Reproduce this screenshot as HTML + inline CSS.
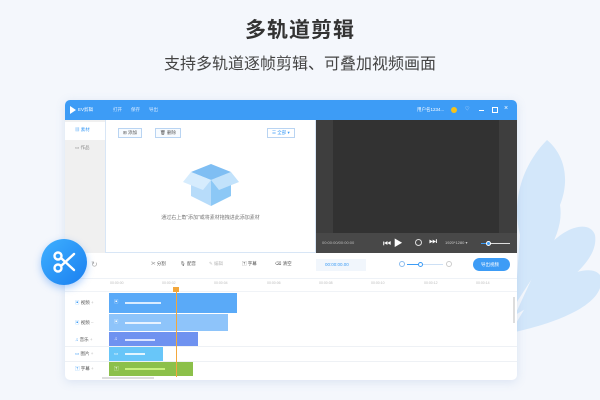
<!DOCTYPE html>
<html><head><meta charset="utf-8"><style>
*{margin:0;padding:0;box-sizing:border-box}
body{width:600px;height:400px;overflow:hidden;background:#f4f7fc;font-family:"Liberation Sans","Noto Sans CJK SC",sans-serif;position:relative}
.a{position:absolute}
.t{font-size:4.5px;color:#555;white-space:nowrap}
</style></head><body>
<div class="a" style="left:0;top:14px;width:600px;text-align:center;font-size:21px;font-weight:bold;color:#333;letter-spacing:1px">多轨道剪辑</div>
<div class="a" style="left:0;top:50px;width:600px;text-align:center;font-size:16px;color:#444">支持多轨道逐帧剪辑、可叠加视频画面</div>
<!-- leaves -->
<svg class="a" style="left:505px;top:135px" width="95" height="200" viewBox="0 0 95 200">
<path d="M10 170 C35 130 60 100 55 70 C65 45 60 20 42 5 C22 25 5 60 15 100 Z" fill="#d3e7fa"/>
<path d="M10 180 C45 160 95 130 90 100 C85 85 60 90 40 115 Z" fill="#d3e7fa"/>
<path d="M5 198 C45 190 105 170 95 140 C85 128 55 140 25 165 Z" fill="#d3e7fa"/>
</svg>
<!-- window -->
<div class="a" style="left:65px;top:100px;width:452px;height:280px;background:#fff;border-radius:5px;box-shadow:0 2px 10px rgba(100,140,200,.18);overflow:hidden">
 <div class="a" style="left:0;top:0;width:452px;height:20px;background:#3d9cf6"></div>
 <div class="a" style="left:5px;top:6px;width:0;height:0;border-left:6px solid #fff;border-top:4px solid transparent;border-bottom:4px solid transparent"></div>
 <div class="a t" style="left:13px;top:7px;color:#fff">EV剪辑</div>
 <div class="a t" style="left:48px;top:7px;color:#dcecff">打开</div>
 <div class="a t" style="left:66px;top:7px;color:#dcecff">保存</div>
 <div class="a t" style="left:84px;top:7px;color:#dcecff">导出</div>
 <div class="a t" style="left:352px;top:7px;color:#fff">用户名1234...</div>
 <div class="a" style="left:386px;top:7px;width:6px;height:6px;border-radius:50%;background:#f6c21a"></div>
 <div class="a t" style="left:400px;top:6px;color:#cfe3ff">♡</div>
 <div class="a" style="left:414px;top:10px;width:5px;height:1px;background:#fff"></div>
 <div class="a" style="left:427px;top:7px;width:6px;height:6px;border:1px solid #fff"></div>
 <div class="a t" style="left:439px;top:5px;color:#fff;font-size:7px">×</div>
 <!-- sidebar -->
 <div class="a" style="left:0;top:20px;width:40px;height:133px;background:#f0f0f0"></div>
 <div class="a" style="left:0;top:22px;width:40px;height:18px;background:#fff"></div>
 <div class="a t" style="left:10px;top:27px;color:#3d9cf6">▦ 素材</div>
 <div class="a t" style="left:10px;top:45px;color:#888">▭ 作品</div>
 <!-- media -->
 <div class="a" style="left:40px;top:20px;width:211px;height:133px;background:#fff;border:1px solid #d8e6f6;border-top:none"></div>
 <div class="a t" style="left:53px;top:28px;border:1px solid #b9d4f2;padding:1px 4px;background:#f7fbff">⊞ 添加</div>
 <div class="a t" style="left:90px;top:28px;border:1px solid #b9d4f2;padding:1px 4px;background:#f7fbff">🗑 删除</div>
 <div class="a t" style="left:202px;top:28px;border:1px solid #b9d4f2;padding:1px 4px;color:#3d9cf6">☰ 全部 ▾</div>
 <svg class="a" style="left:118px;top:58px" width="56" height="50" viewBox="0 0 56 50">
  <polygon points="28,6 48,14 28,22 8,14" fill="#7fbef3"/>
  <polygon points="8,14 28,22 28,48 8,38" fill="#b7dcfa"/>
  <polygon points="48,14 28,22 28,48 48,38" fill="#8cc8f6"/>
  <polygon points="8,14 0,24 20,32 28,22" fill="#d6ecfd"/>
  <polygon points="48,14 56,24 36,32 28,22" fill="#c2e2fb"/>
 </svg>
 <div class="a t" style="left:40px;width:211px;text-align:center;top:114px;color:#777;font-size:5px">通过右上角"添加"或将素材拖拽进此添加素材</div>
 <!-- preview -->
 <div class="a" style="left:251px;top:20px;width:201px;height:133px;background:#3e3e3e"></div>
 <div class="a" style="left:268px;top:20px;width:166px;height:113px;background:#323232"></div>
 <div class="a" style="left:251px;top:133px;width:201px;height:20px;background:#484848"></div>
 <div class="a t" style="left:257px;top:140px;color:#bbb;font-size:4px">00:00:00/00:00:00</div>
 <div class="a t" style="left:318px;top:136px;color:#fff;font-size:9px">⏮ ▶</div>
 <div class="a" style="left:350px;top:139px;width:7px;height:7px;border:1px solid #ddd;border-radius:50%"></div>
 <div class="a t" style="left:364px;top:136px;color:#fff;font-size:9px">⏭</div>
 <div class="a t" style="left:380px;top:140px;color:#ccc;font-size:4px">1920*1280 ▾</div>
 <div class="a" style="left:416px;top:143px;width:29px;height:1px;background:#ddd"></div>
 <div class="a" style="left:416px;top:143px;width:7px;height:1px;background:#3d9cf6"></div>
 <div class="a" style="left:421px;top:141px;width:5px;height:5px;border-radius:50%;background:#3d9cf6;border:1px solid #fff"></div>
 <!-- toolbar -->
 <div class="a t" style="left:26px;top:160px;color:#aaa;font-size:8px">↻</div>
 <div class="a t" style="left:86px;top:161px">✂ 分割</div>
 <div class="a t" style="left:115px;top:161px">🎙 配音</div>
 <div class="a t" style="left:144px;top:161px;color:#bbb">✎ 编辑</div>
 <div class="a t" style="left:177px;top:161px">🅃 字幕</div>
 <div class="a t" style="left:210px;top:161px">⌫ 清空</div>
 <div class="a" style="left:251px;top:159px;width:50px;height:12px;background:#f1f6fc"></div>
 <div class="a t" style="left:260px;top:162px;color:#3d9cf6">00:00:00.00</div>
 <div class="a" style="left:334px;top:161px;width:6px;height:6px;border:1px solid #8bbcee;border-radius:50%"></div>
 <div class="a" style="left:342px;top:164px;width:36px;height:1px;background:#cde0f5"></div>
 <div class="a" style="left:342px;top:164px;width:12px;height:1px;background:#3d9cf6"></div>
 <div class="a" style="left:353px;top:162px;width:5px;height:5px;border:1px solid #3d9cf6;border-radius:50%;background:#fff"></div>
 <div class="a" style="left:381px;top:161px;width:6px;height:6px;border:1px solid #ccc;border-radius:50%"></div>
 <div class="a" style="left:408px;top:158px;width:37px;height:13px;border-radius:7px;background:#3d9cf6"></div>
 <div class="a t" style="left:416px;top:162px;color:#fff">导出视频</div>
 <!-- ruler -->
 <div class="a" style="left:0;top:178px;width:452px;height:1px;background:#eef2f7"></div>
 <div class="a t" style="left:45px;top:181px;color:#bbb;font-size:3.5px">00:00:00</div>
 <div class="a t" style="left:97px;top:181px;color:#bbb;font-size:3.5px">00:00:02</div>
 <div class="a t" style="left:149px;top:181px;color:#bbb;font-size:3.5px">00:00:04</div>
 <div class="a t" style="left:202px;top:181px;color:#bbb;font-size:3.5px">00:00:06</div>
 <div class="a t" style="left:254px;top:181px;color:#bbb;font-size:3.5px">00:00:08</div>
 <div class="a t" style="left:306px;top:181px;color:#bbb;font-size:3.5px">00:00:10</div>
 <div class="a t" style="left:359px;top:181px;color:#bbb;font-size:3.5px">00:00:12</div>
 <div class="a t" style="left:411px;top:181px;color:#bbb;font-size:3.5px">00:00:14</div>
 <div class="a" style="left:0;top:191px;width:452px;height:1px;background:#f0f3f7"></div>
 <!-- track rows -->
 <div class="a" style="left:44px;top:193px;width:128px;height:20px;background:#5aaaf8"></div>
 <div class="a" style="left:44px;top:214px;width:119px;height:17px;background:#8ec4fa"></div>
 <div class="a" style="left:44px;top:232px;width:89px;height:14px;background:#6f92f0"></div>
 <div class="a" style="left:44px;top:247px;width:54px;height:14px;background:#68c6f9"></div>
 <div class="a" style="left:44px;top:262px;width:84px;height:14px;background:#8cc04a"></div>
 <div class="a" style="left:60px;top:202px;width:36px;height:2px;background:#d8ebff"></div>
 <div class="a" style="left:60px;top:222px;width:36px;height:2px;background:#e7f2ff"></div>
 <div class="a" style="left:60px;top:239px;width:30px;height:2px;background:#dbe5ff"></div>
 <div class="a" style="left:60px;top:253px;width:20px;height:2px;background:#e2f5ff"></div>
 <div class="a" style="left:60px;top:268px;width:40px;height:2px;background:#c9f07e"></div>
 <div class="a t" style="left:49px;top:199px;color:#fff">▣</div>
 <div class="a t" style="left:49px;top:219px;color:#fff">▣</div>
 <div class="a t" style="left:49px;top:236px;color:#fff">♫</div>
 <div class="a t" style="left:49px;top:251px;color:#fff">▭</div>
 <div class="a t" style="left:49px;top:266px;color:#fff">🅃</div>
 <div class="a" style="left:0;top:246px;width:452px;height:1px;background:#eef1f5"></div>
 <div class="a" style="left:0;top:261px;width:452px;height:1px;background:#eef1f5"></div>
 <div class="a t" style="left:10px;top:200px"><span style="color:#3d9cf6">▣</span> 视频 <span style="color:#bbb">+</span></div>
 <div class="a t" style="left:10px;top:220px"><span style="color:#3d9cf6">▣</span> 视频 <span style="color:#bbb">–</span></div>
 <div class="a t" style="left:10px;top:237px"><span style="color:#3d9cf6">♫</span> 音乐 <span style="color:#bbb">+</span></div>
 <div class="a t" style="left:10px;top:251px"><span style="color:#3d9cf6">▭</span> 图片 <span style="color:#bbb">+</span></div>
 <div class="a t" style="left:10px;top:266px"><span style="color:#3d9cf6">🅃</span> 字幕 <span style="color:#bbb">+</span></div>
 <div class="a" style="left:111px;top:187px;width:1px;height:90px;background:#f3a73b"></div>
 <div class="a" style="left:108px;top:187px;width:6px;height:5px;background:#f3a73b"></div>
 <div class="a" style="left:448px;top:197px;width:2px;height:26px;background:#ddd"></div>
 <div class="a" style="left:37px;top:277px;width:52px;height:2px;background:#ddd"></div>
</div>
<!-- scissor circle -->
<div class="a" style="left:41px;top:239px;width:46px;height:46px;border-radius:50%;background:linear-gradient(135deg,#3fb0ff,#1a7ff0);box-shadow:0 3px 8px rgba(30,120,240,.35)"></div>
<svg class="a" style="left:50px;top:248px" width="28" height="28" viewBox="0 0 28 28" fill="none" stroke="#fff" stroke-width="2.4" stroke-linecap="round">
 <circle cx="8" cy="8" r="3.5"/><circle cx="8" cy="20" r="3.5"/>
 <line x1="11" y1="10" x2="24" y2="22"/><line x1="11" y1="18" x2="24" y2="6"/>
</svg>
</body></html>
